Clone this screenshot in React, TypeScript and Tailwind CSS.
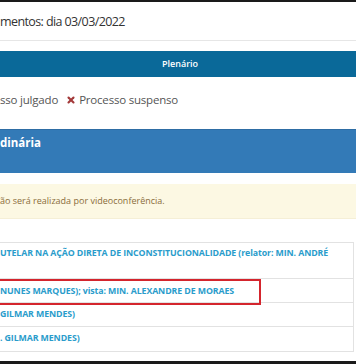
import { X } from 'lucide-react'

const rows = [
  { h: 'h-[36px]', pt: 'pt-[4px]', text: 'UTELAR NA AÇÃO DIRETA DE INCONSTITUCIONALIDADE (relator: MIN. ANDRÉ' },
  { h: 'h-[24px]', pt: 'pt-[6px]', text: 'NUNES MARQUES); vista: MIN. ALEXANDRE DE MORAES' },
  { h: 'h-[24px]', pt: 'pt-[5px]', text: 'GILMAR MENDES)' },
  { h: 'h-[25px]', pt: 'pt-[5px]', text: '. GILMAR MENDES)' },
]

export default function App() {
  return (
    <div
      className="relative w-[356px] h-[364px] bg-white overflow-hidden flex flex-col"
      style={{ fontFamily: '"Open Sans", "Liberation Sans", sans-serif' }}
    >
      <div className="h-[2px] bg-[#1a1a1a]" />

      <div className="h-[39px] border-b border-[#e6e6e6] flex items-center pt-[3px]">
        <h2 className="text-[12.5px] leading-none text-[#333] tracking-[-0.6px]">mentos: dia 03/03/2022</h2>
      </div>

      <div className="mt-[10px] h-[26px] bg-[#0a6999] flex items-center justify-center">
        <span className="text-[9px] font-semibold text-white pl-[4px]">Plenário</span>
      </div>

      <div className="mt-[15px] h-[16px] flex items-center gap-[8px] text-[11.5px] text-[#555] tracking-[-0.2px]">
        <span>sso julgado</span>
        <span className="flex items-center gap-[3px]">
          <X className="w-[10px] h-[10px] text-[#a33a3a]" strokeWidth={5} />
          <span>Processo suspenso</span>
        </span>
      </div>

      <div className="mt-[21px] h-[44px] bg-[#337ab7] border-t border-[#2e6da4] pt-[6px]">
        <div className="text-[11.5px] font-bold text-white leading-[14px]">dinária</div>
      </div>

      <div className="mt-[11px] h-[35px] bg-[#fcf8e3] border-b border-[#f5efd6] flex items-center">
        <span className="text-[9px] text-[#8a6d3b]">ão será realizada por videoconferência.</span>
      </div>

      <div className="mt-[23px] w-[354px] border-t border-r border-[#e2e2e2]">
        {rows.map((r, i) => (
          <div
            key={i}
            className={`${r.h} ${r.pt} border-b border-[#e2e2e2] text-[8.8px] font-bold text-[#2a9ccb] whitespace-nowrap leading-[12px] tracking-[-0.1px]`}
          >
            {r.text}
          </div>
        ))}
      </div>

      <div className="absolute left-[-4px] top-[279px] w-[265px] h-[26px] border-2 border-[#d4252d]" />

      <div className="absolute left-0 right-0 bottom-0 h-[3px] bg-[#1a1a1a]" />
    </div>
  )
}
